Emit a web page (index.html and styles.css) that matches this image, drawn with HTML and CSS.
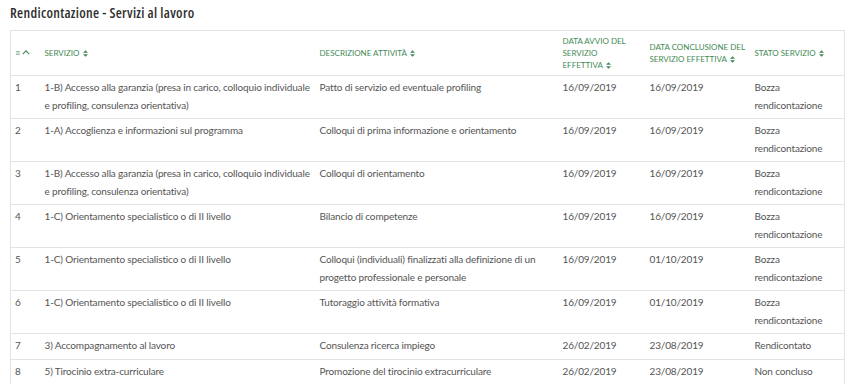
FILE: index.html
```html
<!DOCTYPE html>
<html lang="it">
<head>
<meta charset="utf-8">
<title>Rendicontazione - Servizi al lavoro</title>
<link rel="stylesheet" href="styles.css">
</head>
<body>
<h1 class="title">Rendicontazione - Servizi al lavoro</h1>
<table class="grid">
  <colgroup>
    <col class="c-num"><col class="c-serv"><col class="c-desc"><col class="c-start"><col class="c-end"><col class="c-state">
  </colgroup>
  <thead>
    <tr>
      <th class="h-num"><span class="bars">&#8801;</span><svg class="chev" viewBox="0 0 10 6" width="8" height="5"><path d="M1 5 L5 1 L9 5" fill="none" stroke="currentColor" stroke-width="1.4"/></svg></th>
      <th>SERVIZIO <svg class="sort" viewBox="0 0 6 8" width="5" height="7"><path d="M3 0 L6 3 H0 Z M3 8 L0 5 H6 Z" fill="currentColor"/></svg></th>
      <th>DESCRIZIONE ATTIVITÀ <svg class="sort" viewBox="0 0 6 8" width="5" height="7"><path d="M3 0 L6 3 H0 Z M3 8 L0 5 H6 Z" fill="currentColor"/></svg></th>
      <th class="h-start">DATA AVVIO DEL SERVIZIO EFFETTIVA <svg class="sort" viewBox="0 0 6 8" width="5" height="7"><path d="M3 0 L6 3 H0 Z M3 8 L0 5 H6 Z" fill="currentColor"/></svg></th>
      <th>DATA CONCLUSIONE DEL SERVIZIO EFFETTIVA <svg class="sort" viewBox="0 0 6 8" width="5" height="7"><path d="M3 0 L6 3 H0 Z M3 8 L0 5 H6 Z" fill="currentColor"/></svg></th>
      <th>STATO SERVIZIO <svg class="sort" viewBox="0 0 6 8" width="5" height="7"><path d="M3 0 L6 3 H0 Z M3 8 L0 5 H6 Z" fill="currentColor"/></svg></th>
    </tr>
  </thead>
  <tbody>
    <tr><td>1</td><td>1-B) Accesso alla garanzia (presa in carico, colloquio individuale e profiling, consulenza orientativa)</td><td>Patto di servizio ed eventuale profiling</td><td>16/09/2019</td><td>16/09/2019</td><td>Bozza rendicontazione</td></tr>
    <tr><td>2</td><td>1-A) Accoglienza e informazioni sul programma</td><td>Colloqui di prima informazione e orientamento</td><td>16/09/2019</td><td>16/09/2019</td><td>Bozza rendicontazione</td></tr>
    <tr><td>3</td><td>1-B) Accesso alla garanzia (presa in carico, colloquio individuale e profiling, consulenza orientativa)</td><td>Colloqui di orientamento</td><td>16/09/2019</td><td>16/09/2019</td><td>Bozza rendicontazione</td></tr>
    <tr><td>4</td><td>1-C) Orientamento specialistico o di II livello</td><td>Bilancio di competenze</td><td>16/09/2019</td><td>16/09/2019</td><td>Bozza rendicontazione</td></tr>
    <tr><td>5</td><td>1-C) Orientamento specialistico o di II livello</td><td>Colloqui (individuali) finalizzati alla definizione di un progetto professionale e personale</td><td>16/09/2019</td><td>01/10/2019</td><td>Bozza rendicontazione</td></tr>
    <tr><td>6</td><td>1-C) Orientamento specialistico o di II livello</td><td>Tutoraggio attività formativa</td><td>16/09/2019</td><td>01/10/2019</td><td>Bozza rendicontazione</td></tr>
    <tr><td>7</td><td>3) Accompagnamento al lavoro</td><td>Consulenza ricerca impiego</td><td>26/02/2019</td><td>23/08/2019</td><td>Rendicontato</td></tr>
    <tr><td>8</td><td>5) Tirocinio extra-curriculare</td><td>Promozione del tirocinio extracurriculare</td><td>26/02/2019</td><td>23/08/2019</td><td>Non concluso</td></tr>
  </tbody>
</table>
</body>
</html>
```
FILE: styles.css
```css
body {
  margin: 0;
  padding: 4px 6px 0 10px;
  background: #ffffff;
  font-family: "Lato", "Open Sans", sans-serif;
  color: #555555;
}
.title {
  margin: 0 0 8px 0;
  font-family: "Open Sans", "Lato", sans-serif;
  font-size: 14px;
  font-weight: 600;
  font-stretch: 75%;
  letter-spacing: 0.3px;
  line-height: 18px;
  color: #2f2f2f;
}
.grid {
  width: 834px;
  border-collapse: collapse;
  table-layout: fixed;
  border: 1px solid #e3e3e3;
}
.c-num { width: 30px; }
.c-serv { width: 275px; }
.c-desc { width: 243px; }
.c-start { width: 87px; }
.c-end { width: 105px; }
.c-state { width: 94px; }
.grid th {
  text-align: left;
  vertical-align: middle;
  font-size: 8px;
  font-weight: 400;
  line-height: 12px;
  color: #3f8a55;
  padding: 4px 4px 4px 4px;
  height: 36px;
  border-bottom: 1px solid #e3e3e3;
}
.grid th.h-start { padding-right: 10px; }
.grid th .sort { vertical-align: -1px; margin-left: 1px; }
.h-num .bars { font-size: 9px; margin-right: 2px; }
.h-num .chev { vertical-align: 1px; }
.grid td {
  font-size: 10px;
  letter-spacing: -0.15px;
  line-height: 17.5px;
  vertical-align: top;
  padding: 3px 4px 4px 4px;
  border-bottom: 1px solid #e3e3e3;
  color: #555555;
}
```
